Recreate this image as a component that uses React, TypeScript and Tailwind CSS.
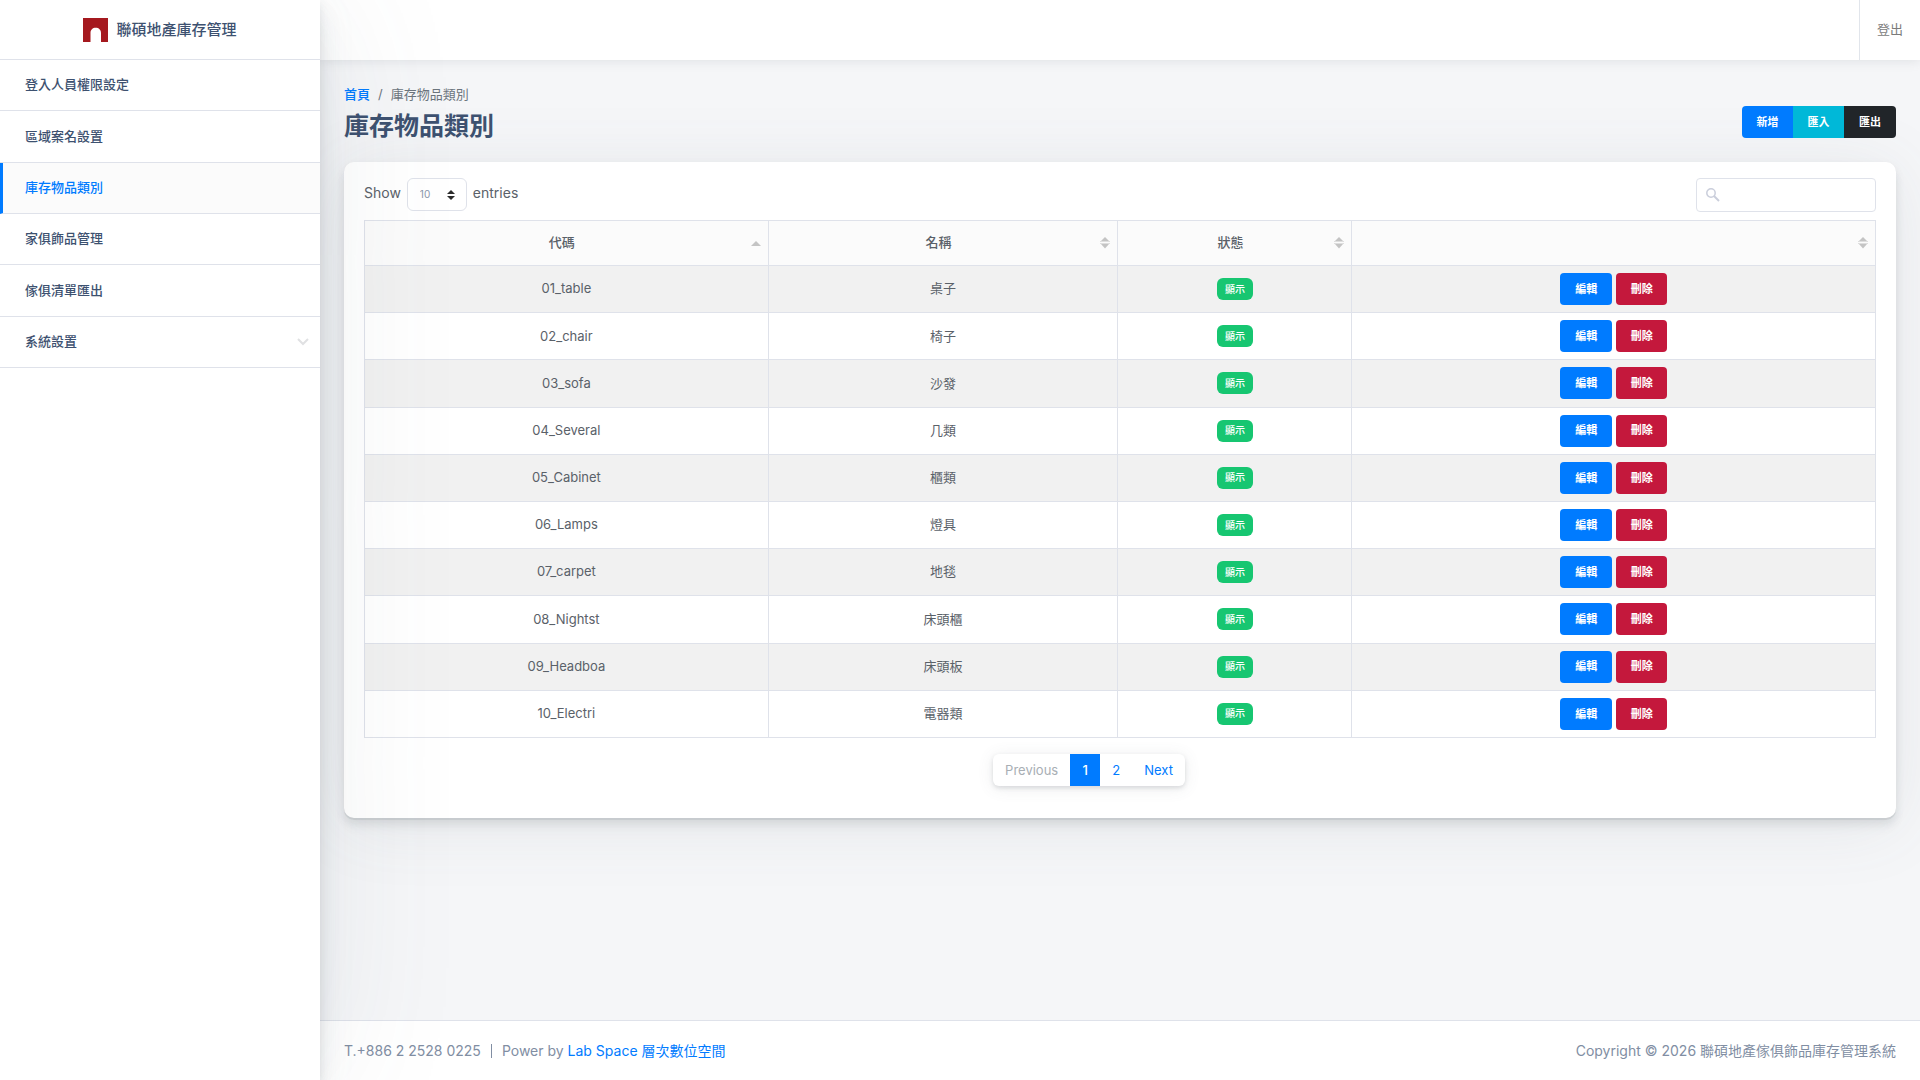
import React from 'react';

const NAV = ['登入人員權限設定', '區域案名設置', '庫存物品類別', '家俱飾品管理', '傢俱清單匯出', '系統設置'];
const ACTIVE = '庫存物品類別';
const EXPANDABLE = '系統設置';

const ROWS = [
  { code: '01_table', name: '桌子' },
  { code: '02_chair', name: '椅子' },
  { code: '03_sofa', name: '沙發' },
  { code: '04_Several', name: '几類' },
  { code: '05_Cabinet', name: '櫃類' },
  { code: '06_Lamps', name: '燈具' },
  { code: '07_carpet', name: '地毯' },
  { code: '08_Nightst', name: '床頭櫃' },
  { code: '09_Headboa', name: '床頭板' },
  { code: '10_Electri', name: '電器類' },
];

function Logo() {
  return (
    <svg width="25" height="24" viewBox="0 0 25 24" aria-hidden="true">
      <path d="M0 0h25v24h-7V15c0-3.2-2.2-5.2-5.300-5.200S7.500 11.800 7.500 15v9H0z" fill="#a5191f" />
    </svg>
  );
}

function SortIcon({ active = false }: { active?: boolean }) {
  if (active) {
    return (
      <svg width="10" height="5" viewBox="0 0 10 5" aria-hidden="true">
        <path d="M0 5L5 0l5 5z" fill="#c4c4c4" />
      </svg>
    );
  }
  return (
    <svg width="10" height="12" viewBox="0 0 10 12" aria-hidden="true">
      <path d="M1 4L5 0l4 4z" fill="#c4c4c4" />
      <path d="M0 4.500h10M0 6.500h10" stroke="#dedede" />
      <path d="M1 7h8l-4 4.500z" fill="#c4c4c4" />
    </svg>
  );
}

function HeaderCell({ label, width, active }: { label: string; width: string; active?: boolean }) {
  return (
    <th
      scope="col"
      aria-sort={active ? 'ascending' : undefined}
      className={`${width} h-[45px] border border-[#dfe2ea] bg-[#fbfbfb] p-0 font-medium`}
    >
      <button type="button" aria-label={label || '排序'} className="flex w-full items-center pl-2 pr-[7px]">
        <span className="flex-1 text-center">{label}</span>
        <SortIcon active={active} />
      </button>
    </th>
  );
}

function Sidebar() {
  return (
    <aside className="z-20 w-80 shrink-0 bg-white shadow-[0_2px_150px_rgba(90,97,105,0.1),0_4px_8px_rgba(90,97,105,0.12),0_15px_22px_rgba(90,97,105,0.1),0_7px_35px_rgba(165,182,201,0.1)]">
      <a
        href="#"
        className="flex h-[60px] items-center justify-center gap-2 border-b border-[#dfe2ea] pt-px text-[15px] font-medium text-[#3d5170]"
      >
        <Logo />
        聯碩地產庫存管理
      </a>
      <nav className="grid min-h-[308px] auto-rows-fr text-[13px] font-medium">
        {NAV.map((item) => (
          <a
            key={item}
            href="#"
            className={`flex items-center justify-between border-b border-[#dfe2ea] pr-[11px] ${
              item === ACTIVE ? 'border-l-[3px] border-l-[#007bff] bg-[#fbfbfb] pl-[22px] text-[#007bff]' : 'pl-[25px] text-[#3d5170]'
            }`}
          >
            {item}
            {item === EXPANDABLE && (
              <svg width="12" height="8" viewBox="0 0 12 8" fill="none" stroke="#e0e1e3" strokeWidth="2" aria-hidden="true">
                <path d="M1 1l5 5 5-5" />
              </svg>
            )}
          </a>
        ))}
      </nav>
    </aside>
  );
}

function DataTable() {
  return (
    <table className="mt-2 h-[518px] w-full border-collapse text-center text-[13px]">
      <thead>
        <tr>
          <HeaderCell label="代碼" width="w-[404px]" active />
          <HeaderCell label="名稱" width="w-[350px]" />
          <HeaderCell label="狀態" width="w-[234px]" />
          <HeaderCell label="" width="w-[524px]" />
        </tr>
      </thead>
      <tbody>
        {ROWS.map((row) => (
          <tr key={row.code} className="odd:bg-[#f1f1f1]">
            <td className="border border-[#dfe2ea]">{row.code}</td>
            <td className="border border-[#dfe2ea]">{row.name}</td>
            <td className="border border-[#dfe2ea]">
              <div className="flex justify-center">
                <span className="flex h-[22px] items-center rounded-md bg-[#17c671] px-2 text-[10px] font-medium text-white">顯示</span>
              </div>
            </td>
            <td className="border border-[#dfe2ea]">
              <div className="flex justify-center gap-1 text-[11px] font-bold text-white">
                <button type="button" className="h-8 w-[52px] rounded bg-[#007bff]">編輯</button>
                <button type="button" className="h-8 w-[51px] rounded bg-[#c4183c]">刪除</button>
              </div>
            </td>
          </tr>
        ))}
      </tbody>
    </table>
  );
}

export default function App() {
  return (
    <div className="flex min-h-screen overflow-hidden bg-[#f5f6f8] font-[Inter,'Noto_Sans_CJK_TC',sans-serif] text-[#5a6169]">
      <Sidebar />
      <div className="flex min-w-0 flex-1 flex-col">
        <header className="z-10 flex h-[60px] justify-end bg-white shadow-[0_2px_10px_rgba(90,97,105,0.12)]">
          <a href="#" className="flex items-center border-l border-[#e1e5eb] px-[17px] text-[13px] text-[#7b7b7b]">
            登出
          </a>
        </header>

        <main className="flex-1 px-6">
          <div className="flex h-[102px] items-start justify-between">
            <div className="pt-6">
              <nav aria-label="breadcrumb" className="flex gap-2 text-[13px] leading-5">
                <a href="#" className="font-medium text-[#007bff]">首頁</a>
                <span className="text-[#6c757d]">/</span>
                <span className="text-[#6c757d]">庫存物品類別</span>
              </nav>
              <h1 className="text-[25px] font-semibold leading-11 text-[#3d5170]">庫存物品類別</h1>
            </div>
            <div className="mt-[46px] flex overflow-hidden rounded text-[11px] font-bold text-white">
              <button type="button" className="h-8 w-[51px] bg-[#007bff]">新增</button>
              <button type="button" className="h-8 w-[51px] bg-[#00b8d8]">匯入</button>
              <button type="button" className="h-8 w-[52px] bg-[#212529]">匯出</button>
            </div>
          </div>

          <section className="rounded-[10px] bg-white px-5 pb-8 pt-4 shadow-[0_2px_0_rgba(90,97,105,0.11),0_4px_8px_rgba(90,97,105,0.12),0_10px_10px_rgba(90,97,105,0.06),0_7px_70px_rgba(90,97,105,0.1)]">
            <div className="flex items-start justify-between">
              <label className="flex items-center gap-1.5 text-sm">
                <span className="-mt-1">Show</span>
                <span className="relative">
                  <select className="h-[33px] w-[60px] appearance-none rounded-md border border-[#dfe2ea] bg-white pl-3 text-[10px] text-[#8a96ab]">
                    <option>10</option>
                  </select>
                  <svg className="pointer-events-none absolute right-3 top-3" width="8" height="10" viewBox="0 0 8 10" aria-hidden="true">
                    <path d="M0 4l4-4 4 4zM0 6h8l-4 4z" fill="#2b2b2b" />
                  </svg>
                </span>
                <span className="-mt-1">entries</span>
              </label>
              <label className="relative">
                <svg className="absolute left-2.5 top-2.5" width="14" height="14" viewBox="0 0 14 14" fill="none" stroke="#cacedb" aria-hidden="true">
                  <circle cx="5" cy="5" r="4.200" strokeWidth="1.500" />
                  <path d="M8 8l5 5" strokeWidth="2" />
                </svg>
                <input
                  type="search"
                  aria-label="搜尋"
                  className="h-[34px] w-[180px] rounded border border-[#dfe2ea] pl-8 pr-2 text-xs outline-none"
                />
              </label>
            </div>

            <DataTable />

            <div className="mt-4 flex justify-center pr-[62px]">
              <nav
                aria-label="pagination"
                className="flex overflow-hidden rounded-md bg-white text-[13px] shadow-[0_2px_4px_rgba(90,97,105,0.18),0_2px_16px_rgba(90,97,105,0.12)]"
              >
                <button type="button" disabled className="h-8 px-3 pt-px text-[#a8aeb4]">Previous</button>
                <button type="button" className="h-8 w-[30px] bg-[#007bff] pt-px font-medium text-white">1</button>
                <button type="button" className="h-8 w-8 pt-px text-[#007bff]">2</button>
                <button type="button" className="h-8 px-3 pt-px text-[#007bff]">Next</button>
              </nav>
            </div>
          </section>
        </main>

        <footer className="flex h-[60px] items-center justify-between border-t border-[#dfe2ea] bg-white px-6 text-sm text-[#818ea3]">
          <div className="flex items-center">
            <span>T.+886 2 2528 0225</span>
            <span className="mx-[10px] h-3.5 w-px bg-[#818ea3]" />
            <span>
              Power by <a href="#" className="text-[#007bff]">Lab Space 層次數位空間</a>
            </span>
          </div>
          <span>Copyright © 2026 聯碩地產傢俱飾品庫存管理系統</span>
        </footer>
      </div>
    </div>
  );
}
